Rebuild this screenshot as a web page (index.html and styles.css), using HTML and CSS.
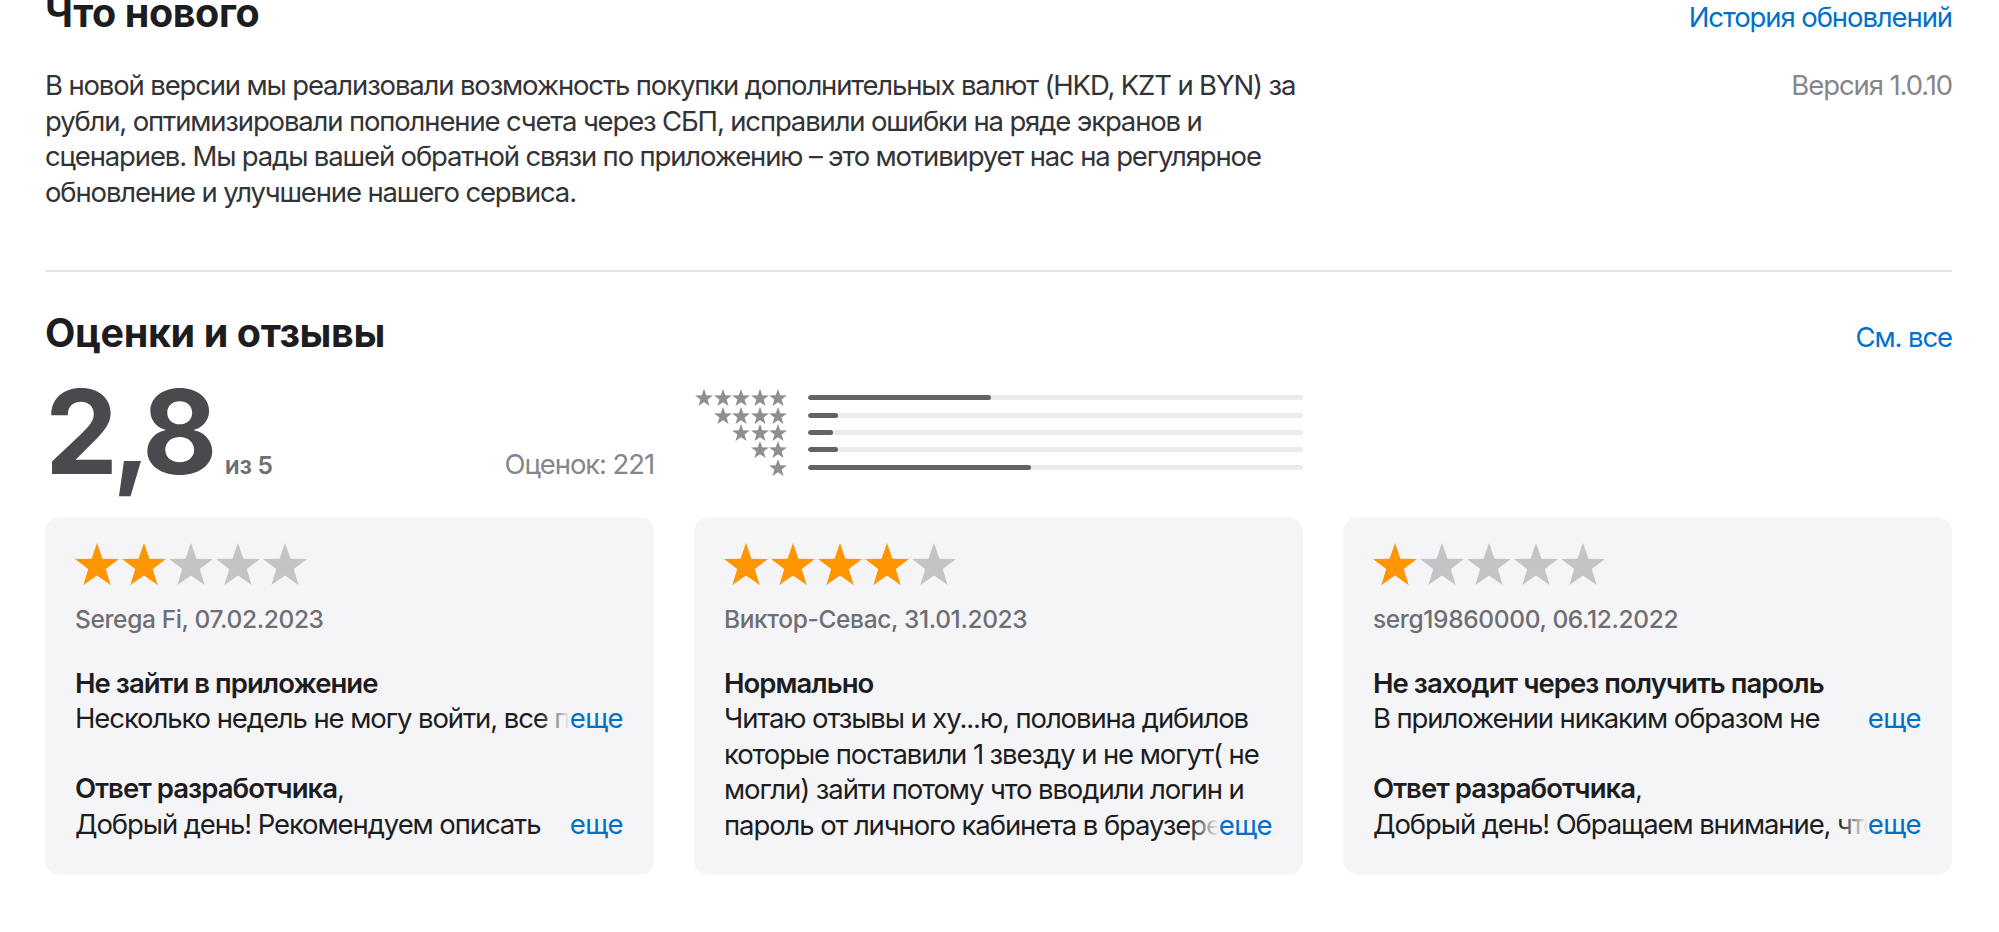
FILE: index.html
```html
<!DOCTYPE html>
<html lang="ru">
<head>
<meta charset="utf-8">
<title>Что нового — Оценки и отзывы</title>
<link rel="stylesheet" href="styles.css">
</head>
<body>
<svg class="defs" width="0" height="0" aria-hidden="true">
  <symbol id="star" viewBox="-9.51 -10 19.02 18.09">
    <polygon points="0,-10 2.35,-3.24 9.51,-3.09 3.8,1.24 5.88,8.09 0,4 -5.88,8.09 -3.8,1.24 -9.51,-3.09 -2.35,-3.24"/>
  </symbol>
</svg>
<main class="page">
  <section class="whats-new">
    <div class="section-header">
      <h2 class="section-title">Что нового</h2>
      <a class="link" href="#">История обновлений</a>
    </div>
    <div class="whats-new__body">
      <p class="whats-new__text">В новой версии мы реализовали возможность покупки дополнительных валют (HKD, KZT и BYN) за рубли, оптимизировали пополнение счета через СБП, исправили ошибки на ряде экранов и сценариев. Мы рады вашей обратной связи по приложению – это мотивирует нас на регулярное обновление и улучшение нашего сервиса.</p>
      <span class="version">Версия 1.0.10</span>
    </div>
  </section>

  <hr class="divider">

  <section class="ratings">
    <div class="section-header">
      <h2 class="section-title">Оценки и отзывы</h2>
      <a class="link" href="#">См. все</a>
    </div>

    <div class="summary">
      <div class="average">
        <div class="average__score"><span class="average__num">2,8</span><span class="average__out">из 5</span></div>
        <span class="average__count">Оценок: 221</span>
      </div>
      <div class="histogram">
        <div class="histogram__row">
          <span class="mini-stars"><svg class="mini-star"><use href="#star"/></svg><svg class="mini-star"><use href="#star"/></svg><svg class="mini-star"><use href="#star"/></svg><svg class="mini-star"><use href="#star"/></svg><svg class="mini-star"><use href="#star"/></svg></span>
          <span class="bar"><span class="bar__fill" style="width:37%"></span></span>
        </div>
        <div class="histogram__row">
          <span class="mini-stars"><svg class="mini-star"><use href="#star"/></svg><svg class="mini-star"><use href="#star"/></svg><svg class="mini-star"><use href="#star"/></svg><svg class="mini-star"><use href="#star"/></svg></span>
          <span class="bar"><span class="bar__fill" style="width:6%"></span></span>
        </div>
        <div class="histogram__row">
          <span class="mini-stars"><svg class="mini-star"><use href="#star"/></svg><svg class="mini-star"><use href="#star"/></svg><svg class="mini-star"><use href="#star"/></svg></span>
          <span class="bar"><span class="bar__fill" style="width:5%"></span></span>
        </div>
        <div class="histogram__row">
          <span class="mini-stars"><svg class="mini-star"><use href="#star"/></svg><svg class="mini-star"><use href="#star"/></svg></span>
          <span class="bar"><span class="bar__fill" style="width:6%"></span></span>
        </div>
        <div class="histogram__row">
          <span class="mini-stars"><svg class="mini-star"><use href="#star"/></svg></span>
          <span class="bar"><span class="bar__fill" style="width:45%"></span></span>
        </div>
      </div>
    </div>

    <div class="reviews">
      <article class="review">
        <div class="stars">
          <svg class="star star--on"><use href="#star"/></svg><svg class="star star--on"><use href="#star"/></svg><svg class="star"><use href="#star"/></svg><svg class="star"><use href="#star"/></svg><svg class="star"><use href="#star"/></svg>
        </div>
        <div class="review__author">Serega Fi, 07.02.2023</div>
        <h3 class="review__title">Не зайти в приложение</h3>
        <div class="clamp-wrap">
          <p class="clamp clamp--1">Несколько недель не могу войти, все по кругу: код приходит, но вход не выполняется.</p>
          <a class="more" href="#">еще</a>
        </div>
        <h3 class="review__title review__title--reply">Ответ разработчика<span class="comma">,</span></h3>
        <div class="clamp-wrap">
          <p class="clamp clamp--1">Добрый день! Рекомендуем описать ситуацию в чате поддержки, мы обязательно поможем.</p>
          <a class="more" href="#">еще</a>
        </div>
      </article>

      <article class="review">
        <div class="stars">
          <svg class="star star--on"><use href="#star"/></svg><svg class="star star--on"><use href="#star"/></svg><svg class="star star--on"><use href="#star"/></svg><svg class="star star--on"><use href="#star"/></svg><svg class="star"><use href="#star"/></svg>
        </div>
        <div class="review__author">Виктор-Севас, 31.01.2023</div>
        <h3 class="review__title">Нормально</h3>
        <div class="clamp-wrap">
          <p class="clamp clamp--4">Читаю отзывы и ху...ю, половина дибилов которые поставили 1 звезду и не могут( не могли) зайти потому что вводили логин и пароль от личного кабинета в браузере, а надо было просто получить пароль в приложении.</p>
          <a class="more" href="#">еще</a>
        </div>
      </article>

      <article class="review">
        <div class="stars">
          <svg class="star star--on"><use href="#star"/></svg><svg class="star"><use href="#star"/></svg><svg class="star"><use href="#star"/></svg><svg class="star"><use href="#star"/></svg><svg class="star"><use href="#star"/></svg>
        </div>
        <div class="review__author">serg19860000, 06.12.2022</div>
        <h3 class="review__title">Не заходит через получить пароль</h3>
        <div class="clamp-wrap">
          <p class="clamp clamp--1">В приложении никаким образом не получается войти через получить пароль.</p>
          <a class="more" href="#">еще</a>
        </div>
        <h3 class="review__title review__title--reply">Ответ разработчика<span class="comma">,</span></h3>
        <div class="clamp-wrap">
          <p class="clamp clamp--1">Добрый день! Обращаем внимание, что вход в приложение осуществляется по номеру телефона.</p>
          <a class="more" href="#">еще</a>
        </div>
      </article>
    </div>
  </section>
</main>
</body>
</html>
```

FILE: styles.css
```css
* { box-sizing: border-box; }

html, body {
  margin: 0;
  padding: 0;
  background: #ffffff;
}

body {
  font-family: "Inter", "Noto Sans", "Liberation Sans", sans-serif;
  color: #1d1d1f;
  -webkit-font-smoothing: antialiased;
}

.defs { position: absolute; width: 0; height: 0; overflow: hidden; }

.page {
  padding: 0 47px 0 45px;
  margin-top: -10px;
}

.section-header {
  display: flex;
  justify-content: space-between;
  align-items: baseline;
}

.section-title {
  margin: 0;
  font-size: 39.5px;
  line-height: 46px;
  font-weight: 700;
  letter-spacing: -0.01em;
  color: #1d1d1f;
}

.link {
  font-size: 27.5px;
  letter-spacing: -0.04em;
  color: #0070c9;
  text-decoration: none;
}

/* What's new */
.whats-new__body {
  display: flex;
  justify-content: space-between;
  align-items: flex-start;
  margin-top: 32px;
}

.whats-new__text {
  margin: 0;
  width: 1258px;
  font-size: 27.5px;
  line-height: 35.7px;
  letter-spacing: -0.042em;
  color: #333336;
}

.version {
  font-size: 27.5px;
  line-height: 35.7px;
  letter-spacing: -0.04em;
  color: #86868b;
}

.divider {
  margin: 59px 0 0;
  border: 0;
  height: 2px;
  background: #e3e3e6;
}

/* Ratings */
.ratings .section-header { margin-top: 38px; }

.summary {
  display: grid;
  grid-template-columns: repeat(3, 1fr);
  column-gap: 40px;
  margin-top: 18px;
}

.average {
  display: flex;
  justify-content: space-between;
  align-items: baseline;
}

.average__score {
  display: flex;
  align-items: baseline;
}

.average__num {
  font-size: 116px;
  line-height: 117px;
  font-weight: 700;
  letter-spacing: -0.05em;
  color: #4a4a4e;
}

.average__out {
  margin-left: 13px;
  font-size: 24.5px;
  font-weight: 600;
  letter-spacing: -0.01em;
  color: #6e6e73;
}

.average__count {
  font-size: 27.5px;
  letter-spacing: -0.04em;
  color: #86868b;
}

.histogram {
  align-self: end;
  display: grid;
  grid-auto-rows: 17.3px;
  padding-bottom: 15px;
}

.histogram__row {
  display: grid;
  grid-template-columns: 93px 1fr;
  column-gap: 21px;
  align-items: center;
}

.mini-stars {
  display: flex;
  justify-content: flex-end;
  gap: 0.5px;
}

.mini-star {
  width: 18px;
  height: 17px;
  fill: #8e8e93;
}

.bar {
  display: block;
  height: 5px;
  border-radius: 3px;
  background: #ececf0;
  overflow: hidden;
}

.bar__fill {
  display: block;
  height: 100%;
  border-radius: 3px;
  background: #636366;
}

/* Reviews */
.reviews {
  display: grid;
  grid-template-columns: repeat(3, 1fr);
  column-gap: 40px;
  margin-top: 26px;
}

.review {
  background: #f5f5f7;
  border-radius: 15px;
  padding: 26px 31px 32px 30px;
}

.stars {
  display: flex;
  gap: 3px;
  height: 42px;
}

.star {
  width: 44px;
  height: 42px;
  fill: #c4c4c6;
}

.star--on { fill: #ff9500; }

.review__author {
  margin-top: 19px;
  font-size: 24.5px;
  line-height: 30px;
  font-weight: 500;
  letter-spacing: -0.015em;
  color: #6e6e73;
}

.review__title {
  margin: 32px 0 0;
  font-size: 27.5px;
  line-height: 35.5px;
  font-weight: 600;
  letter-spacing: -0.035em;
  color: #1d1d1f;
}

.review__title--reply { margin-top: 34.5px; }

.comma { font-weight: 400; }

.clamp-wrap { position: relative; }

.clamp {
  margin: 0;
  font-size: 27.5px;
  line-height: 35.5px;
  letter-spacing: -0.04em;
  color: #1d1d1f;
  overflow: hidden;
}

.clamp--1 { max-height: 35.5px; }
.clamp--4 { max-height: 142px; }

.more {
  position: absolute;
  right: 0;
  bottom: 0;
  padding-left: 30px;
  font-size: 27.5px;
  line-height: 35.5px;
  letter-spacing: -0.02em;
  color: #0070c9;
  text-decoration: none;
  background: linear-gradient(to right, rgba(245, 245, 247, 0) 0, #f5f5f7 30px);
}
```
